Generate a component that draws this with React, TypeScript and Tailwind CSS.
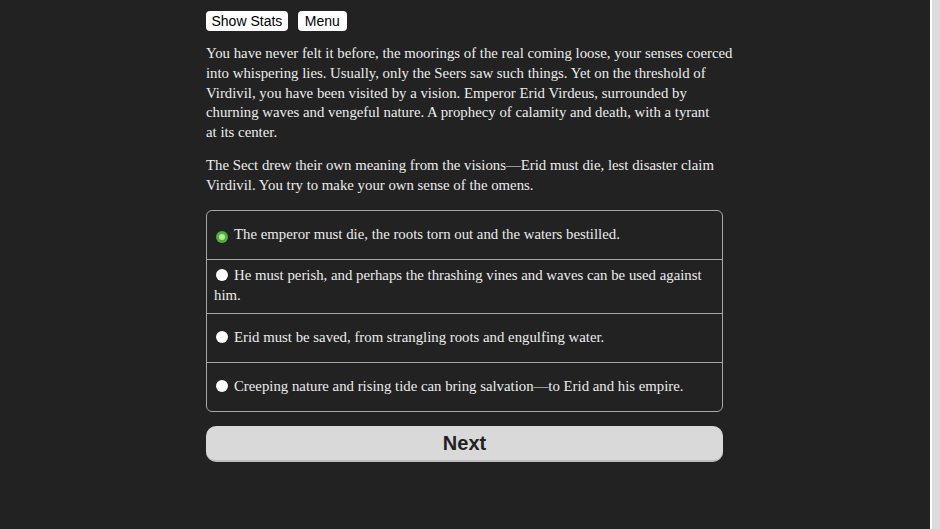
import { useState } from "react";

const OPTIONS = [
  "The emperor must die, the roots torn out and the waters bestilled.",
  "He must perish, and perhaps the thrashing vines and waves can be used against him.",
  "Erid must be saved, from strangling roots and engulfing water.",
  "Creeping nature and rising tide can bring salvation\u2014to Erid and his empire.",
];

function Radio({ checked }: { checked: boolean }) {
  return checked ? (
    <span className="relative top-[1px] mr-[6px] inline-flex h-[12px] w-[12px] items-center justify-center rounded-full bg-[#4caf3f]">
      <span className="h-[6px] w-[6px] rounded-full bg-[#b6ec8e]" />
    </span>
  ) : (
    <span className="relative top-[1px] mr-[6px] inline-block h-[12px] w-[12px] rounded-full bg-white" />
  );
}

export default function App() {
  const [choice, setChoice] = useState(0);

  return (
    <div className="flex h-[529px] w-full bg-[#222222]">
      <div className="flex-1 overflow-hidden">
        <div className="mx-auto w-[518px] pt-[11px] pr-[1px]">
          <div className="flex gap-[10px] font-['Liberation_Sans',Arial,sans-serif] text-[14px] leading-[18px] text-black">
            <button className="h-[20px] rounded-[4px] bg-white px-[5.5px]">Show Stats</button>
            <button className="h-[20px] rounded-[4px] bg-white px-[7px]">Menu</button>
          </div>

          <div className="font-['Liberation_Serif','Times_New_Roman',serif] text-[14.8px] leading-[19.8px] text-[#ececec]">
            <p className="mt-[13px] whitespace-nowrap">
              You have never felt it before, the moorings of the real coming loose, your senses coerced
              <br />
              into whispering lies. Usually, only the Seers saw such things. Yet on the threshold of
              <br />
              Virdivil, you have been visited by a vision. Emperor Erid Virdeus, surrounded by
              <br />
              churning waves and vengeful nature. A prophecy of calamity and death, with a tyrant
              <br />
              at its center.
            </p>
            <p className="mt-[13px] whitespace-nowrap">
              The Sect drew their own meaning from the visions{"\u2014"}Erid must die, lest disaster claim
              <br />
              Virdivil. You try to make your own sense of the omens.
            </p>

            <div className="mt-[14px] overflow-hidden rounded-[6px] border border-[#a8a8a8]">
              {OPTIONS.map((text, i) => (
                <div
                  key={i}
                  onClick={() => setChoice(i)}
                  className={`cursor-pointer px-[7px] ${
                    i > 0 ? "border-t border-[#a8a8a8]" : ""
                  } ${i === 1 ? "pt-[6px] pb-[7px]" : i === 0 ? "pt-[14px] pb-[15px]" : "pt-[14px] pb-[14px]"}`}
                >
                  <span className="ml-[2px]">
                    <Radio checked={choice === i} />
                  </span>
                  {i === 1 ? (
                    <>
                      He must perish, and perhaps the thrashing vines and waves can be used against
                      <br />
                      him.
                    </>
                  ) : (
                    text
                  )}
                </div>
              ))}
            </div>
          </div>

          <button className="mt-[14px] h-[36px] w-full rounded-[10px] border-b-2 border-[#bdbdbd] bg-[#d9d9d9] font-['Liberation_Sans',Arial,sans-serif] text-[20px] font-bold text-[#222]">
            Next
          </button>
        </div>
      </div>
      <div className="w-[10px] border-l-2 border-white bg-[#dcdcdc]" />
    </div>
  );
}
